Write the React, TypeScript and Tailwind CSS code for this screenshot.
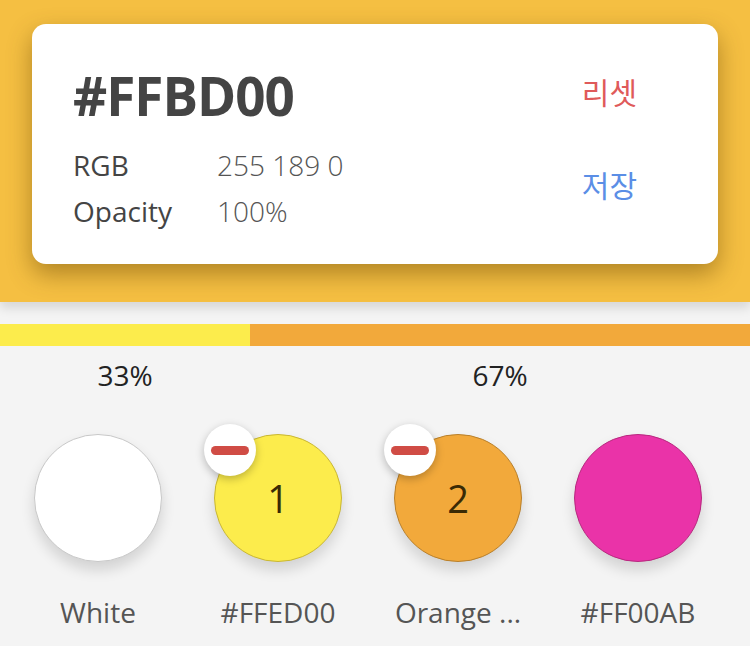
const swatches = [
  { name: "White", color: "bg-white", border: "border-[#c8c8c8]", badge: false, num: "" },
  { name: "#FFED00", color: "bg-[#fcec4c]", border: "border-[#c9b733]", badge: true, num: "1" },
  { name: "Orange ...", color: "bg-[#f2a93b]", border: "border-[#b9802b]", badge: true, num: "2" },
  { name: "#FF00AB", color: "bg-[#ea33a8]", border: "border-[#b8297f]", badge: false, num: "" },
];

const Swatch = ({ s }: { s: (typeof swatches)[number] }) => (
  <div className="flex w-[180px] shrink-0 flex-col items-center">
    <div className="relative">
      <div
        className={`flex h-[128px] w-[128px] items-center justify-center rounded-full border ${s.color} ${s.border} shadow-[0_8px_14px_rgba(0,0,0,0.14)]`}
      >
        <span className="text-[38px] leading-none text-[#3a2a05]">{s.num}</span>
      </div>
      {s.badge && (
        <div className="absolute -left-[10px] -top-[10px] flex h-[52px] w-[52px] items-center justify-center rounded-full bg-white shadow-[0_3px_8px_rgba(0,0,0,0.25)]">
          <div className="h-[9px] w-[38px] rounded-full bg-[#d04c45]" />
        </div>
      )}
    </div>
    <div className="mt-[32px] text-[28px] leading-[36px] text-[#555]">{s.name}</div>
  </div>
);

const App: React.FC = () => {
  return (
    <div
      className="h-[646px] w-[750px] overflow-hidden bg-[#f4f4f4]"
      style={{ fontFamily: '"Open Sans", "Noto Sans CJK KR", sans-serif' }}
    >
      <div className="relative z-10 h-[302px] bg-[#f5bf42] px-[32px] pt-[24px] shadow-[0_6px_10px_rgba(0,0,0,0.12)]">
        <div className="flex h-[240px] rounded-[14px] bg-white pl-[41px] pr-[81px] pt-[45px] shadow-[0_10px_24px_rgba(90,60,0,0.45)]">
          <div className="flex-1">
            <div className="text-[53px] font-bold leading-none tracking-[-1px] text-[#444]">#FFBD00</div>
            <div className="mt-[24px] grid grid-cols-[144px_1fr] gap-y-[8px] text-[28px] leading-[38px]">
              <span className="font-medium text-[#444]">RGB</span>
              <span className="font-light text-[#555]">255 189 0</span>
              <span className="font-medium text-[#444]">Opacity</span>
              <span className="font-light text-[#555]">100%</span>
            </div>
          </div>
          <div
            className="flex flex-col pt-[2px] text-[30px] leading-[40px]"
            style={{ fontFamily: '"Noto Sans CJK KR", sans-serif' }}
          >
            <span className="text-[#df5a5a]">리셋</span>
            <span className="mt-[53px] text-[#5b8ee6]">저장</span>
          </div>
        </div>
      </div>

      <div className="mt-[22px] flex h-[22px]">
        <div className="w-[250px] bg-[#fcec4c]" />
        <div className="flex-1 bg-[#f2a93b]" />
      </div>

      <div className="flex pt-[11px] text-[28px] leading-[36px] text-[#222]">
        <div className="w-[250px] text-center">33%</div>
        <div className="w-[500px] text-center">67%</div>
      </div>

      <div className="mt-[41px] flex pl-[8px]">
        {swatches.map((s) => (
          <Swatch key={s.name} s={s} />
        ))}
      </div>
    </div>
  );
};

export default App;
